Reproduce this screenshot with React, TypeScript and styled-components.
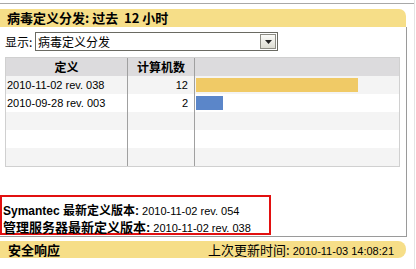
import React from 'react';
import styled, {createGlobalStyle} from 'styled-components';

const GlobalStyle = createGlobalStyle`
  html, body {
    margin: 0;
    padding: 0;
    background: #ffffff;
  }
  body {
    font-family: 'Liberation Sans', 'Noto Sans CJK SC', sans-serif;
    color: #000;
  }
`;

const rows = [
    {def: '2010-11-02 rev. 038', count: 12, color: '#f0ca66'},
    {def: '2010-09-28 rev. 003', count: 2, color: '#5b86c9'},
    {def: '', count: 0, color: ''},
    {def: '', count: 0, color: ''},
    {def: '', count: 0, color: ''},
];

const cjk = `'Noto Sans CJK SC', 'Liberation Sans', sans-serif`;
const latin = `'Liberation Sans', 'Noto Sans CJK SC', sans-serif`;

const App: React.FC = () => {
    const maxCount = 12;
    return (
    <Page>
        <GlobalStyle/>
        <TopLine/>
        <Panel>
            <TitleBar>病毒定义分发: 过去&nbsp;&nbsp;12 小时</TitleBar>
            <PanelBody>
                <SelectRow>
                    <SelectLabel>显示:</SelectLabel>
                    <SelectBox>
                        <SelectText>病毒定义分发</SelectText>
                        <DropButton>
                            <svg width="7" height="4" viewBox="0 0 7 4">
                                <polygon points="0,0 7,0 3.5,4" fill="#222"/>
                            </svg>
                        </DropButton>
                    </SelectBox>
                </SelectRow>
                <Table>
                    <HeadRow>
                        <HeadCell>定义</HeadCell>
                        <HeadCell>计算机数</HeadCell>
                        <HeadCell/>
                    </HeadRow>
                    {rows.map((r, i) => (
                        <BodyRow key={i} $odd={i % 2 === 0}>
                            <DefCell>{r.def}</DefCell>
                            <CountCell>{r.count ? r.count : ''}</CountCell>
                            <BarCell>
                                {r.count > 0 && <Bar $color={r.color} style={{width: (r.count / maxCount) * 162}}/>}
                            </BarCell>
                        </BodyRow>
                    ))}
                </Table>
                <VersionBox>
                    <VersionLine>
                        <VLabel>Symantec 最新定义版本:</VLabel>
                        <VValue>2010-11-02 rev. 054</VValue>
                    </VersionLine>
                    <VersionLine>
                        <VLabel $big>管理服务器最新定义版本:</VLabel>
                        <VValue>2010-11-02 rev. 038</VValue>
                    </VersionLine>
                </VersionBox>
            </PanelBody>
        </Panel>
        <BottomBar>
            <BottomTitle>安全响应</BottomTitle>
            <UpdateInfo>
                <UpdateLabel>上次更新时间:</UpdateLabel>
                <UpdateValue>2010-11-03 14:08:21</UpdateValue>
            </UpdateInfo>
        </BottomBar>
    </Page>)
}

export default App;

const Page = styled.div`
  width: 415px;
  height: 269px;
  border-right: 1px solid #e4e4e4;
  padding-top: 3px;
  box-sizing: border-box;
  overflow: hidden;
`;

const TopLine = styled.div`
  height: 0;
  border-top: 1px solid #a8a8a8;
  margin-bottom: 5px;
`;

const Panel = styled.div`
  width: 407px;
`;

const TitleBar = styled.div`
  height: 18px;
  width: 406px;
  background: #f6de88;
  border-radius: 0 7px 0 0;
  font-family: ${cjk};
  font-weight: bold;
  font-size: 13px;
  line-height: 18px;
  padding-left: 7px;
  box-sizing: border-box;
  white-space: nowrap;
`;

const PanelBody = styled.div`
  height: 210px;
  border-right: 1px solid #9a9a9a;
  border-bottom: 1px solid #9a9a9a;
  box-sizing: border-box;
  padding-top: 5px;
  display: flex;
  flex-direction: column;
`;

const SelectRow = styled.div`
  display: flex;
  align-items: center;
  padding-left: 5px;
  height: 19px;
`;

const SelectLabel = styled.span`
  font-family: ${cjk};
  font-size: 12px;
  width: 30px;
`;

const SelectBox = styled.div`
  width: 243px;
  height: 19px;
  border: 1px solid #6a6a62;
  box-sizing: border-box;
  display: flex;
  align-items: center;
  justify-content: space-between;
  padding: 0 1px 0 2px;
  background: #fff;
`;

const SelectText = styled.span`
  font-family: ${cjk};
  font-size: 12px;
`;

const DropButton = styled.div`
  width: 16px;
  height: 15px;
  box-sizing: border-box;
  border: 1px solid #8c8c84;
  background: linear-gradient(#fbfbf8, #dcdcd2);
  display: flex;
  align-items: center;
  justify-content: center;
`;

const Table = styled.div`
  margin: 6px 0 0 5px;
  width: 395px;
  border: 1px solid #d0d0d0;
  box-sizing: border-box;
`;

const HeadRow = styled.div`
  display: grid;
  grid-template-columns: 122px 67px 1fr;
  height: 18px;
  background: #dcdbdd;
`;

const HeadCell = styled.div`
  font-family: ${cjk};
  font-weight: bold;
  font-size: 12px;
  line-height: 18px;
  text-align: center;
  border-right: 1px solid #a0a0a0;
  &:last-child {
    border-right: none;
  }
`;

const BodyRow = styled.div<{$odd: boolean}>`
  display: grid;
  grid-template-columns: 122px 67px 1fr;
  height: 18px;
  background: ${p => p.$odd ? '#f4f4f4' : '#ffffff'};
`;

const DefCell = styled.div`
  font-family: ${latin};
  font-size: 11px;
  line-height: 18px;
  padding-left: 1px;
  border-right: 1px solid #a0a0a0;
  white-space: nowrap;
`;

const CountCell = styled.div`
  font-family: ${latin};
  font-size: 11px;
  line-height: 18px;
  text-align: right;
  padding-right: 6px;
  border-right: 1px solid #a0a0a0;
`;

const BarCell = styled.div`
  display: flex;
  align-items: center;
  padding-left: 1px;
`;

const Bar = styled.div<{$color: string}>`
  height: 14px;
  background: ${p => p.$color};
`;

const VersionBox = styled.div`
  margin-top: auto;
  margin-bottom: 1px;
  width: 271px;
  height: 40px;
  border: 2px solid #e21010;
  box-sizing: border-box;
  padding: 3px 0 0 1px;
  display: flex;
  flex-direction: column;
  justify-content: center;
`;

const VersionLine = styled.div`
  display: flex;
  align-items: baseline;
  height: 16px;
  white-space: nowrap;
`;

const VLabel = styled.span<{$big?: boolean}>`
  font-family: ${latin};
  font-weight: bold;
  font-size: ${p => p.$big ? '13px' : '12px'};
  margin-right: 3px;
`;

const VValue = styled.span`
  font-family: ${latin};
  font-size: 11px;
`;

const BottomBar = styled.div`
  margin-top: 4px;
  width: 406px;
  height: 17px;
  background: #f6de88;
  border-radius: 0 8px 8px 0;
  display: flex;
  align-items: center;
  justify-content: space-between;
  padding: 0 12px 0 8px;
  box-sizing: border-box;
`;

const BottomTitle = styled.span`
  font-family: ${cjk};
  font-weight: bold;
  font-size: 13px;
`;

const UpdateInfo = styled.span`
  display: flex;
  align-items: baseline;
  white-space: nowrap;
`;

const UpdateLabel = styled.span`
  font-family: ${cjk};
  font-size: 13px;
  margin-right: 3px;
`;

const UpdateValue = styled.span`
  font-family: ${latin};
  font-size: 11px;
`;
